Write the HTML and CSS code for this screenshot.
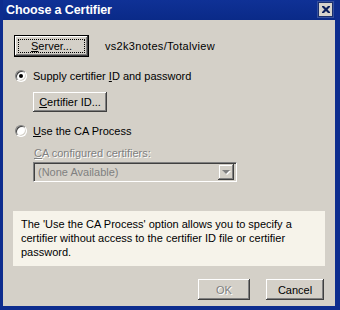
FILE: index.html
```html
<!DOCTYPE html>
<html>
<head>
<meta charset="utf-8">
<link rel="stylesheet" href="styles.css">
</head>
<body>
<div class="window">
  <div class="titlebar">
    <span class="title">Choose a Certifier</span>
    <span class="close">
      <svg width="8" height="7" viewBox="0 0 8 7"><path d="M0 0h2l2 2 2-2h2v1l-2.5 2.5L8 6v1H6L4 5 2 7H0V6l2.5-2.5L0 1z" fill="#0b1f5c"/></svg>
    </span>
  </div>
  <div class="client">
    <div class="row server-row">
      <button class="btn default"><span class="focus"><u>S</u>erver...</span></button>
      <span class="server-name">vs2k3notes/Totalview</span>
    </div>
    <label class="radio-row r1">
      <span class="radio checked"></span>
      <span>Supply certifier <u>I</u>D and password</span>
    </label>
    <div class="indent cert-row">
      <button class="btn cert"><u>C</u>ertifier ID...</button>
    </div>
    <label class="radio-row r2">
      <span class="radio"></span>
      <span><u>U</u>se the CA Process</span>
    </label>
    <div class="indent disabled-label"><u>C</u>A configured certifiers:</div>
    <div class="indent combo-row">
      <div class="combo">
        <span class="combo-text">(None Available)</span>
        <span class="combo-btn"><span class="arrow"></span></span>
      </div>
    </div>
    <div class="info">The 'Use the CA Process' option allows you to specify a certifier without access to the certifier ID file or certifier password.</div>
    <div class="actions">
      <button class="btn ok" disabled>OK</button>
      <button class="btn cancel">Cancel</button>
    </div>
  </div>
</div>
</body>
</html>
```
FILE: styles.css
```css
html, body {
  margin: 0;
  padding: 0;
  background: #0c2c8c;
}
.window {
  width: 340px;
  height: 310px;
  box-sizing: border-box;
  padding: 0 5px 4px 3px;
  background: #0d2c8e;
  display: flex;
  flex-direction: column;
  font-family: "Liberation Sans", Arial, sans-serif;
  font-size: 11px;
  color: #000;
}
.titlebar {
  height: 20px;
  flex: none;
  display: flex;
  align-items: center;
  justify-content: space-between;
  padding: 0 2px 0 3px;
  background: linear-gradient(#0f3196, #0a2a88);
}
.title {
  color: #fff;
  font-weight: bold;
  font-size: 12.5px;
  font-family: "Liberation Sans", Arial, sans-serif;
  letter-spacing: -0.1px;
}
.close {
  width: 15px;
  height: 15px;
  box-sizing: border-box;
  margin-top: -2px;
  background: #d6d3cc;
  border: 1px solid #1a2f6e;
  box-shadow: 0 0 0 1px #35509e;
  display: flex;
  align-items: center;
  justify-content: center;
}
.client {
  flex: 1;
  background: #d4d0c8;
  display: flex;
  flex-direction: column;
  padding: 15px 10px 0 10px;
}
.row { display: flex; align-items: center; }
.btn {
  font: inherit;
  color: #000;
  background: #d4d0c8;
  border: none;
  padding: 0;
  box-shadow: inset -1px -1px #404040, inset 1px 1px #ffffff, inset -2px -2px #808080, inset 2px 2px #d4d0c8;
  display: flex;
  align-items: center;
  justify-content: center;
}
.btn.default {
  width: 75px;
  height: 22px;
  margin-left: 1px;
  border: 1px solid #000;
  box-sizing: border-box;
  padding: 3px;
}
.btn .focus {
  flex: 1;
  align-self: stretch;
  display: flex;
  align-items: center;
  justify-content: center;
  outline: 1px dotted #000;
  outline-offset: -1px;
}
.server-name { margin-left: 16px; letter-spacing: 0.3px; }
.radio-row {
  display: flex;
  align-items: center;
  height: 13px;
  margin-left: 2px;
}
.r1 { margin-top: 12px; }
.r2 { margin-top: 12px; }
.radio {
  width: 12px;
  height: 12px;
  box-sizing: border-box;
  border-radius: 50%;
  background: #fff;
  border: 1px solid;
  border-color: #808080 #fff #fff #808080;
  box-shadow: inset 1px 1px #404040, inset -1px -1px #d4d0c8;
  margin-right: 6px;
  position: relative;
}
.radio.checked::after {
  content: "";
  position: absolute;
  left: 3px;
  top: 3px;
  width: 4px;
  height: 4px;
  border-radius: 50%;
  background: #000;
}
.indent { margin-left: 20px; }
.cert-row { margin-top: 10px; }
.btn.cert { width: 74px; height: 20px; }
.disabled-label {
  margin-top: 10px;
  height: 13px;
  color: #808080;
  text-shadow: 1px 1px #fff;
  margin-left: 21px;
}
.combo-row { margin-top: 2px; }
.combo {
  width: 204px;
  height: 20px;
  box-sizing: border-box;
  border: 1px solid;
  border-color: #808080 #fff #fff #808080;
  box-shadow: inset 1px 1px #404040, inset -1px -1px #d4d0c8;
  display: flex;
  align-items: center;
  justify-content: space-between;
  padding: 2px;
}
.combo-text {
  color: #808080;
  padding-left: 2px;
}
.combo-btn {
  width: 16px;
  height: 16px;
  box-sizing: border-box;
  background: #d4d0c8;
  box-shadow: inset -1px -1px #404040, inset 1px 1px #d4d0c8, inset -2px -2px #808080, inset 2px 2px #fff;
  display: flex;
  align-items: center;
  justify-content: center;
}
.arrow {
  width: 0;
  height: 0;
  border-left: 4px solid transparent;
  border-right: 4px solid transparent;
  border-top: 4px solid #808080;
  filter: drop-shadow(1px 1px 0 #fff);
}
.info {
  margin-top: 29px;
  height: 55px;
  box-sizing: border-box;
  background: #f6f3ea;
  padding: 6px 8px 0 8px;
  line-height: 14px;
}
.actions {
  margin-top: 13px;
  display: flex;
  justify-content: flex-end;
  gap: 16px;
  padding-right: 1px;
}
.btn.ok, .btn.cancel { width: 52px; height: 21px; }
.btn.cancel { width: 58px; }
.btn.ok { color: #808080; text-shadow: 1px 1px #fff; }
```
